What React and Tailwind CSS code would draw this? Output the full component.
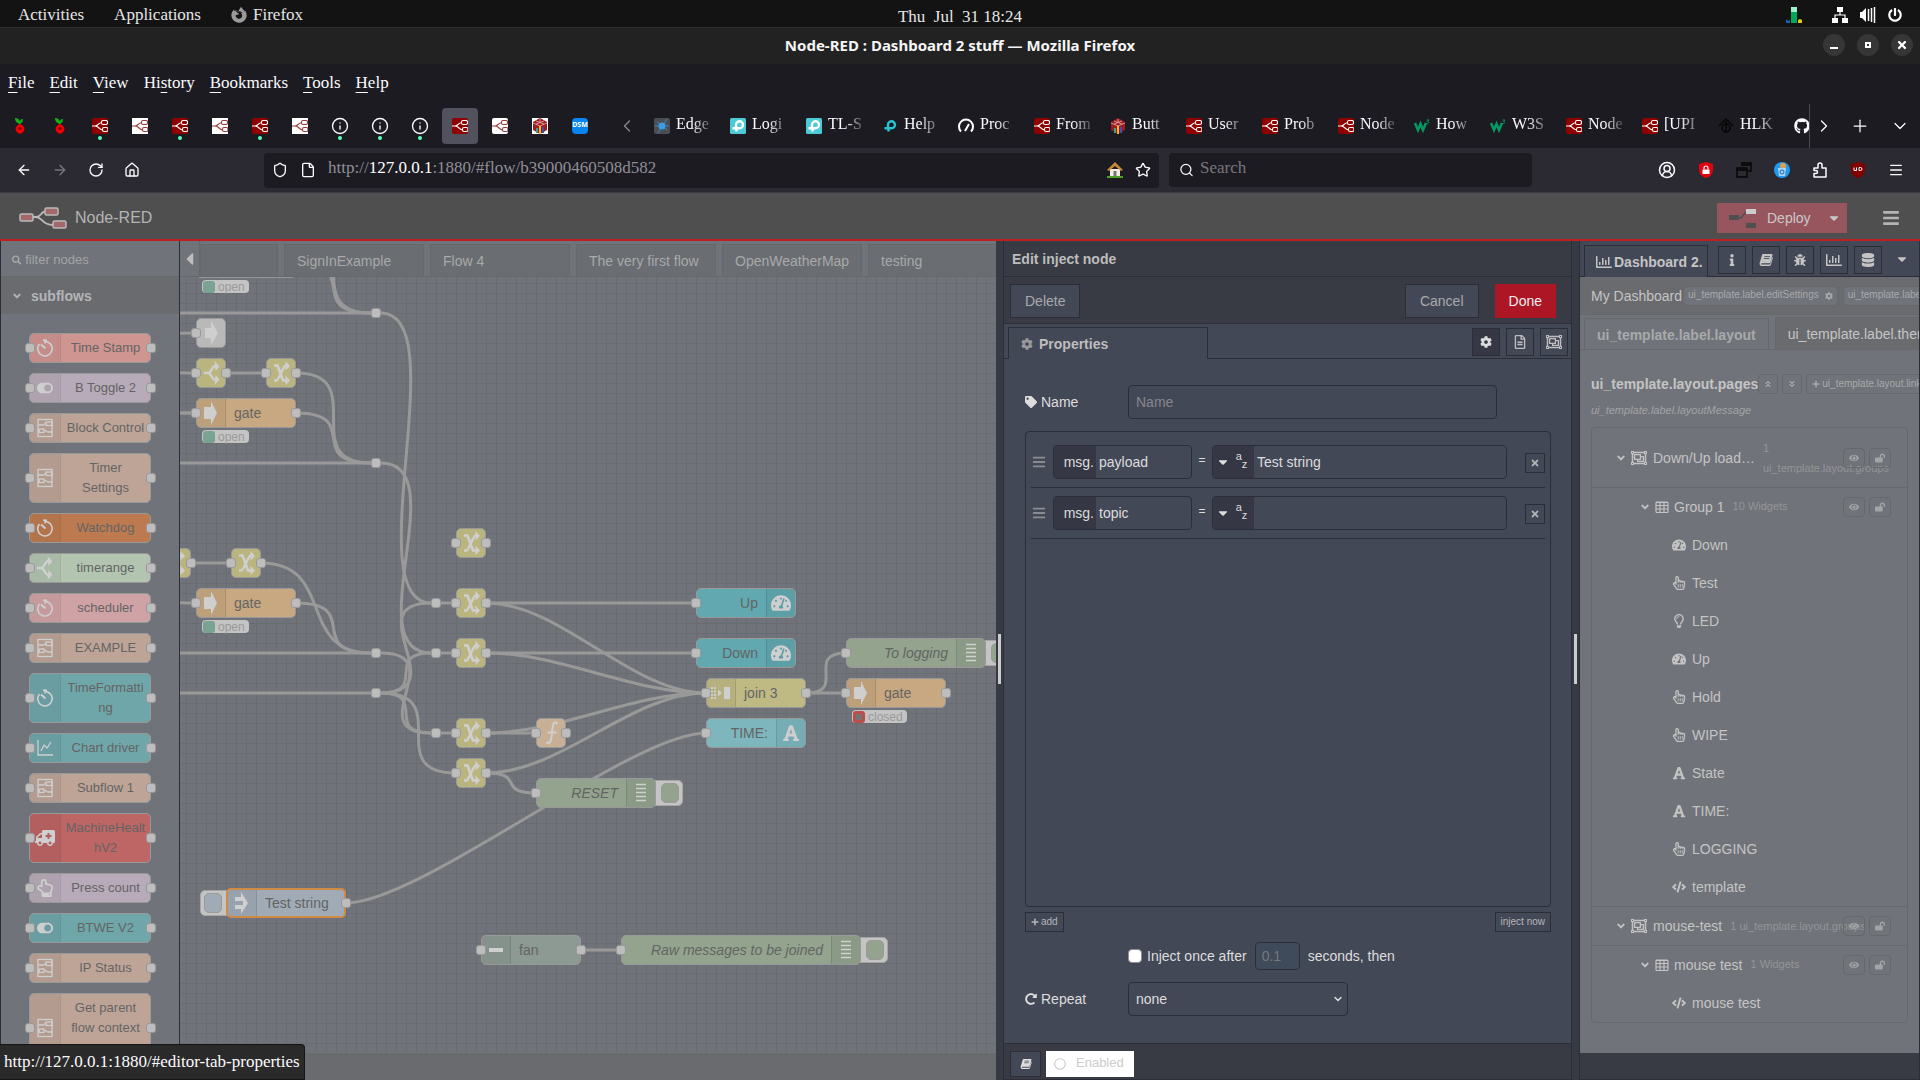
import { useState } from 'react'
import clsx from 'clsx'
import {
  FaSearch, FaCog, FaRegFileAlt, FaRegObjectGroup, FaTag, FaTimes, FaPlus, FaCaretDown, FaCaretLeft, FaBars,
  FaInfo, FaBug, FaRegChartBar, FaDatabase, FaAngleDoubleUp, FaAngleDoubleDown, FaAngleDown, FaEye, FaLockOpen,
  FaTachometerAlt, FaRegHandPointer, FaRegHandPointUp, FaRegLightbulb, FaFont, FaCode, FaRedoAlt,
  FaAmbulance, FaRegCircle, FaGithub, FaFirefoxBrowser, FaPowerOff, FaToggleOn,
} from 'react-icons/fa'
import {
  ArrowLeft, ArrowRight, RotateCw, House, Shield, File, Star, Search, ChevronLeft, ChevronRight, ChevronDown,
  Plus, CircleUserRound, Menu, Info,
} from 'lucide-react'

/* ---------- small drawings ---------- */

function NodeRedMark({ light, rounded }) {
  return (
    <svg viewBox="0 0 16 16" className="size-4 shrink-0">
      <rect width="16" height="16" rx={rounded ? 2 : 0} fill={light ? '#fff' : '#8f0000'} />
      <g fill="none" stroke={light ? '#9b3a3a' : '#fff'} strokeWidth="1.1">
        <path d="M0 8h3c3 0 3-3 7-3.500M3 8c4 0 4 4 8 4" />
        <rect x="9.500" y="2.500" width="6" height="4" rx="1.500" />
        <rect x="10.500" y="9.500" width="5.500" height="4" rx="1.500" />
      </g>
    </svg>
  )
}

function PiHole() {
  return (
    <svg viewBox="0 0 16 16" className="size-4 shrink-0">
      <path d="M8 6C4 5 3 2 3 0c3 0 5 2 5 4 0-2 1-3 3-3 0 2-1 4-3 5z" fill="#12b212" />
      <path d="M8 6l2 1 2 2 .5 2-.5 2-2 2-2 1-2-1-2-2-.5-2 .5-2 2-2z" fill="#f00000" />
      <circle cx="8" cy="10.500" r="1.800" fill="#8b0000" />
    </svg>
  )
}

function CubeMark({ plain }) {
  return (
    <svg viewBox="0 0 16 16" className="size-4 shrink-0">
      {!plain && <rect width="16" height="16" fill="#fff" />}
      <path d="M8 0l7 4v8l-7 4-7-4V4z" fill="#9d1c1f" />
      <path d="M1 5l7 3 7-3M8 1v3M4 3l8 3M12 3L4 6" stroke="#e8b0b0" strokeWidth=".8" fill="none" />
      <path d="M4 15v-5h2v5z" fill="#3f9e8f" />
      <path d="M7 16V8h2v8z" fill="#f0b93a" />
      <path d="M10 15V9h2v6z" fill="#3d50b8" />
    </svg>
  )
}

function TpMark({ plain }) {
  return (
    <svg viewBox="0 0 16 16" className="size-4 shrink-0">
      {!plain && <rect width="16" height="16" rx="1.500" fill="#4acbd6" />}
      <path d="M6 10V7a3.500 3.500 0 1 1 3.500 3.300H2.500M6.500 10v3.500" fill="none" stroke={plain ? '#27c5d3' : '#fff'} strokeWidth="2.400" />
    </svg>
  )
}

function EdgeMark() {
  return (
    <svg viewBox="0 0 16 16" className="size-4 shrink-0">
      <rect width="16" height="16" rx="2" fill="#4b4d52" />
      <path d="M1 8h14M4 15L13 1M3 4l10 8" stroke="#3389cc" strokeWidth="1" />
      <circle cx="8" cy="8" r="3.500" fill="#3f9be0" />
    </svg>
  )
}

function DsmMark() {
  return <span className="flex size-4 items-center justify-center rounded-sm bg-[#0a84f0] font-sans text-[7px] font-bold text-white">DSM</span>
}

function GaugeMark() {
  return (
    <svg viewBox="0 0 16 16" className="size-4 shrink-0" fill="none" stroke="#fff" strokeWidth="2">
      <path d="M3 13.500A7 7 0 1 1 13 13.500M7 13l4-7" />
    </svg>
  )
}

function W3Mark() {
  return (
    <svg viewBox="0 0 16 16" className="size-4 shrink-0" fill="none" stroke="#059862">
      <path d="M1 5l3 7 2.500-6L9 12l3-7" strokeWidth="2.600" />
      <path d="M12.500 2h2.500l-1.500 1.500c2 0 1.500 2.500-1 2" strokeWidth="1" />
    </svg>
  )
}

function TreeMark() {
  return (
    <svg viewBox="0 0 16 16" className="size-4 shrink-0" fill="none" stroke="#050505" strokeWidth="1.400">
      <path d="M1 8l7-7 7 7M8 3v12" />
      <circle cx="8" cy="10" r="4" />
    </svg>
  )
}

function BookIcon({ className }) {
  return (
    <svg viewBox="0 0 16 14" className={clsx('h-3.5 w-4', className)}>
      <path d="M5 0h9.500c.9 0 1.300.6 1 1.400l-2.400 8.200c-.2.800-.8 1.200-1.600 1.200H3.200c-.9 0-1.300.9-.4 1.400h9.800L15.300 3.500c.7.200.8.700.6 1.400l-2.200 7.500c-.3 1-1 1.600-2 1.600H3C1.200 14 0 12.400.6 10.600L3.200 1.700C3.500.6 4 0 5 0z" fill="currentColor" />
      <path d="M6 3h6.500M5.400 5.300h6.500" stroke="#434857" strokeWidth="1" />
    </svg>
  )
}

function TableIcon() {
  return (
    <svg viewBox="0 0 14 12" className="h-3 w-3.5 shrink-0" fill="none" stroke="currentColor" strokeWidth="1.200">
      <rect x="1" y="1" width="12" height="10.500" rx="1" />
      <path d="M1 1.500h12M1 4.500h12M1 8h12M5 1v10M9 1v10" />
    </svg>
  )
}

function SubflowIcon() {
  return (
    <svg viewBox="0 0 16 20" className="h-5 w-4" fill="none" stroke="currentColor" strokeWidth="1.300">
      <rect x="1" y="1.500" width="14" height="17" />
      <path d="M1 7h5c2 0 1-1.500 3-1.500M15 14h-4c-2 0-1-1.500-3-1.500M1 13h2" />
      <rect x="9" y="4" width="6" height="3.500" />
      <rect x="2" y="11" width="5" height="3.500" />
    </svg>
  )
}

function TimerIcon() {
  return (
    <svg viewBox="0 0 18 18" className="size-[18px]" fill="none" stroke="currentColor" strokeWidth="1.600">
      <path d="M9 1.500v3M9 2.500a7.200 7.200 0 1 1-5.500 2.500" />
      <path d="M5 5.500l4.500 4" strokeWidth="2" />
      <path d="M7 1.200h4" />
    </svg>
  )
}

function ChangeIcon() {
  return (
    <svg viewBox="0 0 16 24" className="h-6 w-4">
      <path d="M0 4.500h3.500L9 19.500h3M0 19.500h2.500c2 0 7-15 9-15h.5" fill="none" stroke="currentColor" strokeWidth="2.600" />
      <path d="M11.500 0l4.500 5-4.500 4.500zM11.500 14.500l4.500 5-4.500 4.500z" fill="currentColor" />
    </svg>
  )
}

function SwitchIcon() {
  return (
    <svg viewBox="0 0 16 24" className="h-6 w-4">
      <path d="M0 12h4c4 0 3-7 8-7M4 12c4 0 3 7 8 7" fill="none" stroke="currentColor" strokeWidth="2.400" />
      <path d="M10.500 0l5 5.500-4 4.500zM11.500 14l4 4.500-5 5.500z" fill="currentColor" />
    </svg>
  )
}

function ArrowIcon() {
  return (
    <svg viewBox="0 0 14 24" className="h-6 w-3.5">
      <path d="M0 6h7V0l6 12-6 12v-6H0z" fill="currentColor" />
    </svg>
  )
}

function InjectIcon() {
  return (
    <svg viewBox="0 0 14 24" className="h-6 w-3.5">
      <path d="M0 6h6V1l7 11-7 11v-5H0v-4h8v-4H0z" fill="currentColor" />
    </svg>
  )
}

function LinkIcon() {
  return (
    <svg viewBox="0 0 14 24" className="h-6 w-3.5">
      <path d="M0 7h6V0l7 12-7 12v-7H0v-2a4 4 0 0 0 0-6z" fill="currentColor" />
      <circle cx="3" cy="12" r="2.500" fill="none" stroke="currentColor" strokeWidth="1.500" />
    </svg>
  )
}

function JoinIcon() {
  return (
    <svg viewBox="0 0 20 12" className="h-3 w-5" fill="currentColor">
      <path d="M0 0h2v2H0zM3 0h2v2H3zM0 3.500h2v2H0zM3 3.500h2v2H3zM0 7h2v2H0zM3 7h2v2H3zM0 10h2v2H0zM3 10h2v2H3zM7 2.500L11 6l-4 3.500zM13 0h6v12h-6z" />
    </svg>
  )
}

function DebugIcon() {
  return (
    <svg viewBox="0 0 12 20" className="h-5 w-3" stroke="currentColor" strokeWidth="1.400">
      <path d="M1 1.500h10M1 5.500h10M1 9.500h10M1 13.500h10M1 17.500h10" />
    </svg>
  )
}

function FunctionIcon() {
  return (
    <svg viewBox="0 0 14 24" className="h-6 w-3.5" fill="none" stroke="currentColor" strokeWidth="2">
      <path d="M12.500 3C10-.5 8 2 7.500 7L6.500 16c-.5 5-2.500 7.500-5 5M2.500 11.500h9" />
    </svg>
  )
}

function LineChartIcon() {
  return (
    <svg viewBox="0 0 16 16" className="size-4" fill="none" stroke="currentColor" strokeWidth="1.300">
      <path d="M1 0v15h15M4 11l3-6 3 3 4-6" />
    </svg>
  )
}

function RangeIcon() {
  return <span className="h-1 w-3.5 bg-current" />
}

const ICONS = {
  subflow: SubflowIcon,
  timer: TimerIcon,
  change: ChangeIcon,
  switch: SwitchIcon,
  arrow: ArrowIcon,
  inject: InjectIcon,
  link: LinkIcon,
  join: JoinIcon,
  debug: DebugIcon,
  function: FunctionIcon,
  chart: LineChartIcon,
  range: RangeIcon,
  toggle: () => <FaToggleOn className="size-4" />,
  ambulance: () => <FaAmbulance className="size-5 -scale-x-100" />,
  hand: () => <FaRegHandPointUp className="size-[18px]" />,
  gauge: () => <FaTachometerAlt className="size-5" />,
  font: () => <FaFont className="size-[18px]" />,
}

/* ---------- desktop and browser ---------- */

function DesktopBar() {
  return (
    <div className="grid h-[27px] shrink-0 grid-cols-3 items-center bg-[#131313] px-[18px] text-[17px] text-[#e6e6e6]">
      <div className="flex items-center gap-[30px]">
        <button>Activities</button>
        <button>Applications</button>
        <button className="flex items-center gap-1.5">
          <FaFirefoxBrowser className="size-4 text-[#9a9a9a]" />
          Firefox
        </button>
      </div>
      <time className="whitespace-pre pt-1 text-center">{'Thu  Jul  31 18:24'}</time>
      <div className="flex items-center justify-end gap-3 text-white">
        <svg viewBox="0 0 16 16" className="mr-[18px] size-4">
          <path d="M5 0h6v5H5z" fill="#9ff0c8" />
          <path d="M5 5h6v11H5z" fill="#00a85a" />
          <path d="M0 16v-4l2 2 2-1v3z" fill="#0a6ab8" />
          <path d="M12 16v-3l2-1 2 1v3z" fill="#e8c81c" />
        </svg>
        <svg viewBox="0 0 16 16" className="size-4">
          <path d="M5 0h6v5H5zM0 11h6v5H0zM10 11h6v5h-6z" fill="currentColor" />
          <path d="M8 5v3M3 11V8h10v3" fill="none" stroke="currentColor" strokeWidth="1.200" />
        </svg>
        <svg viewBox="0 0 16 16" className="size-4">
          <path d="M0 5h2l4-4v14l-4-4H0z" fill="currentColor" />
          <path d="M8.500 2v12M11.500 1v14M14.500 0v16" stroke="currentColor" strokeWidth="1.500" />
        </svg>
        <FaPowerOff className="size-3.5" />
      </div>
    </div>
  )
}

function WindowTitle() {
  return (
    <div className="relative flex h-[37px] shrink-0 items-center justify-center border-t border-[#303030] bg-[#222222] pb-0.5">
      <h1 className="font-['Noto_Sans',sans-serif] text-[15px] font-bold text-[#f5f5f5]">Node-RED : Dashboard 2 stuff — Mozilla Firefox</h1>
      <div className="absolute right-[7px] flex gap-3">
        <button aria-label="Minimize" className="flex size-[22px] items-center justify-center rounded-full bg-[#363636]">
          <span className="mt-1.5 h-0.5 w-2 bg-white" />
        </button>
        <button aria-label="Restore" className="flex size-[22px] items-center justify-center rounded-full bg-[#363636]">
          <span className="size-1.5 border-2 border-white" />
        </button>
        <button aria-label="Close" className="flex size-[22px] items-center justify-center rounded-full bg-[#363636]">
          <FaTimes className="size-3 text-white" />
        </button>
      </div>
    </div>
  )
}

const MENUS = [['', 'F', 'ile'], ['', 'E', 'dit'], ['', 'V', 'iew'], ['Hi', 's', 'tory'], ['', 'B', 'ookmarks'], ['', 'T', 'ools'], ['', 'H', 'elp']]

const PINNED = [
  { icon: <PiHole /> },
  { icon: <PiHole /> },
  { icon: <NodeRedMark rounded />, dot: true },
  { icon: <NodeRedMark light /> },
  { icon: <NodeRedMark rounded />, dot: true },
  { icon: <NodeRedMark light /> },
  { icon: <NodeRedMark rounded />, dot: true },
  { icon: <NodeRedMark light /> },
  { icon: <Info className="size-[18px]" strokeWidth={1.8} />, dot: true },
  { icon: <Info className="size-[18px]" strokeWidth={1.8} />, dot: true },
  { icon: <Info className="size-[18px]" strokeWidth={1.8} />, dot: true },
  { icon: <NodeRedMark rounded />, active: true },
  { icon: <NodeRedMark light rounded /> },
  { icon: <CubeMark /> },
  { icon: <DsmMark /> },
]

const TABS = [
  { icon: <EdgeMark />, label: 'Edge' },
  { icon: <TpMark />, label: 'Logi' },
  { icon: <TpMark />, label: 'TL-S' },
  { icon: <TpMark plain />, label: 'Help' },
  { icon: <GaugeMark />, label: 'Proc' },
  { icon: <NodeRedMark rounded />, label: 'From' },
  { icon: <CubeMark plain />, label: 'Butt' },
  { icon: <NodeRedMark rounded />, label: 'User' },
  { icon: <NodeRedMark rounded />, label: 'Prob' },
  { icon: <NodeRedMark rounded />, label: 'Node' },
  { icon: <W3Mark />, label: 'How' },
  { icon: <W3Mark />, label: 'W3S' },
  { icon: <NodeRedMark rounded />, label: 'Node' },
  { icon: <NodeRedMark rounded />, label: '[UPI' },
  { icon: <TreeMark />, label: 'HLK' },
]

function BrowserTabs() {
  return (
    <div className="flex h-[45px] items-center text-[#fbfbfe]">
      {PINNED.map((tab, i) => (
        <button
          key={i}
          aria-label={`Pinned tab ${i + 1}`}
          className={clsx('relative mx-0.5 flex h-9 w-9 shrink-0 items-center justify-center rounded-sm', tab.active && 'bg-[#52525e]')}
        >
          {tab.icon}
          {tab.dot && <span className="absolute bottom-1 size-1 rounded-full bg-[#54ffbd]" />}
        </button>
      ))}
      <ChevronLeft className="mx-[17px] size-5 shrink-0 text-[#8b8b92]" strokeWidth={1.5} />
      <div className="flex flex-1 overflow-hidden border-r border-[#4a4a55]">
        {TABS.map((tab, i) => (
          <button key={i} className="flex h-11 w-[76px] shrink-0 items-center gap-1.5">
            {tab.icon}
            <span className="w-10 whitespace-nowrap pb-1 text-left text-base mask-r-from-40%">{tab.label}</span>
          </button>
        ))}
        <FaGithub className="size-4 shrink-0 self-center" />
      </div>
      <ChevronRight className="ml-1 size-5 shrink-0" strokeWidth={1.5} />
      <Plus className="ml-4 size-5 shrink-0" strokeWidth={1.5} />
      <ChevronDown className="ml-5 mr-2.5 size-5 shrink-0" strokeWidth={1.5} />
    </div>
  )
}

function NavBar() {
  return (
    <div className="flex h-[45px] shrink-0 items-center border-b border-[#3c3b44] bg-[#2b2a33] text-[#fbfbfe]">
      <div className="flex w-[264px] shrink-0 gap-5 pl-4">
        <ArrowLeft className="size-4" />
        <ArrowRight className="size-4 text-[#77767d]" />
        <RotateCw className="size-4" />
        <House className="size-4" />
      </div>
      <div className="flex h-[35px] flex-1 items-center gap-3 rounded bg-[#1c1b22] px-2">
        <Shield className="size-4" />
        <File className="size-4" />
        <a href="#flow" className="flex-1 pb-1 text-[17px] text-[#8f8e95]">
          http://<span className="text-white">127.0.0.1</span>:1880/#flow/b39000460508d582
        </a>
        <svg viewBox="0 0 16 16" className="size-4">
          <path d="M3 7h10v7H3z" fill="#f2ede0" />
          <path d="M0 8l8-8 8 8-2 1-6-5-6 5z" fill="#c9873a" />
          <path d="M6.500 9h3v5h-3z" fill="#777" />
          <path d="M0 14h16v2H0z" fill="#4f9e2c" />
        </svg>
        <Star className="size-4" />
      </div>
      <label className="ml-2.5 flex h-[34px] w-[363px] items-center gap-1.5 rounded bg-[#1c1b22] px-2.5">
        <Search className="size-4" />
        <input aria-label="Search" placeholder="Search" className="w-full pb-1 text-[17px] outline-none placeholder:text-[#77767d]" />
      </label>
      <div className="flex w-[388px] items-center justify-end gap-[22px] pr-4">
        <CircleUserRound className="size-[18px]" />
        <svg viewBox="0 0 16 16" className="size-4">
          <path d="M1 2l7-2 7 2v6c0 4-3 7-7 8-4-1-7-4-7-8z" fill="#e3000f" />
          <path d="M4.500 7.500h7V12h-7z" fill="#fff" />
          <path d="M6 7.500V6a2 2 0 0 1 4 0v1.500" fill="none" stroke="#fff" strokeWidth="1.200" />
        </svg>
        <svg viewBox="0 0 16 16" className="size-4" fill="none" stroke="#050505" strokeWidth="1.400">
          <path d="M1 6h10v9H1zM1 8h10M6 4V1h9v8h-3M6 3h9" />
        </svg>
        <svg viewBox="0 0 16 16" className="size-4">
          <circle cx="8" cy="8" r="8" fill="#1d9bf0" />
          <circle cx="9" cy="4" r="3" fill="#e0a04c" />
          <path d="M4 6h8l-1 8H5z" fill="#a8d4f5" />
          <circle cx="8" cy="10" r="2" fill="none" stroke="#1b63a8" />
        </svg>
        <svg viewBox="0 0 16 16" className="size-4" fill="none" stroke="currentColor" strokeWidth="1.500" strokeLinejoin="round">
          <path d="M2 6h4V3a2 2 0 0 1 4 0v3h4v9H2v-3.500h2a1.500 1.500 0 0 0 0-3H2z" />
        </svg>
        <svg viewBox="0 0 16 16" className="size-4">
          <path d="M1 2l7-2 7 2v6c0 4-3 7-7 8-4-1-7-4-7-8z" fill="#800000" />
          <path d="M4 5.500v3h2.500v-3M9 5.500v3h1.500a1.500 1.500 0 0 0 0-3z" fill="none" stroke="#fff" />
        </svg>
        <Menu className="size-4" />
      </div>
    </div>
  )
}

function EditorHeader() {
  return (
    <header className="flex h-12 shrink-0 items-center border-b-2 border-[#bd2020] bg-[#4f4f4f] pl-[19px] pr-5 pt-[3px]">
      <svg viewBox="0 0 48 22" className="h-[22px] w-12" fill="none" stroke="#bababa" strokeWidth="1.500">
        <path d="M13 10h4c6 0 4-6 11-6M17 10c7 0 5 8 17 8" strokeWidth="1.800" />
        <rect x="1" y="7" width="13" height="7" rx="1.500" fill="#a5686a" />
        <rect x="26" y="1" width="13" height="7" rx="1.500" fill="#a5686a" />
        <rect x="34" y="14" width="13" height="7" rx="1.500" fill="#a5686a" />
      </svg>
      <span className="ml-2 text-base text-[#b4b4b4]">Node-RED</span>
      <button className="ml-auto flex h-[30px] w-[130px] items-center bg-[#97565d] pl-3 pr-1 text-[#c9c9c9]">
        <svg viewBox="0 0 28 20" className="h-5 w-7">
          <path d="M8 10h4l5-6" stroke="#4f4f4f" strokeWidth="1.500" fill="none" />
          <path d="M0 7h10v5H0zM17 15h10v5H17z" fill="#4f4f4f" />
          <path d="M17 1h10v5H17z" fill="#cccccc" />
        </svg>
        <span className="ml-2.5 flex-1 text-left text-sm">Deploy</span>
        <FaCaretDown className="mr-0.5 size-3.5" />
      </button>
      <button aria-label="Main menu" className="ml-[35px] text-[#b4b4b4]">
        <FaBars className="size-[18px]" />
      </button>
    </header>
  )
}

/* ---------- palette ---------- */

const PALETTE = [
  { label: 'Time Stamp', icon: 'timer', color: 'bg-[#cf9591]' },
  { label: 'B Toggle 2', icon: 'toggle', color: 'bg-[#b8abb9]' },
  { label: 'Block Control', icon: 'subflow', color: 'bg-[#bda497]' },
  { label: 'Timer Settings', icon: 'subflow', color: 'bg-[#bda497]' },
  { label: 'Watchdog', icon: 'timer', color: 'bg-[#bd7a50]' },
  { label: 'timerange', icon: 'switch', color: 'bg-[#b3c4b1]' },
  { label: 'scheduler', icon: 'timer', color: 'bg-[#cfa3a6]' },
  { label: 'EXAMPLE', icon: 'subflow', color: 'bg-[#bda497]' },
  { label: 'TimeFormatting', icon: 'timer', color: 'bg-[#6fa6aa]' },
  { label: 'Chart driver', icon: 'chart', color: 'bg-[#6fa6aa]' },
  { label: 'Subflow 1', icon: 'subflow', color: 'bg-[#bda497]' },
  { label: 'MachineHealthV2', icon: 'ambulance', color: 'bg-[#be6565]' },
  { label: 'Press count', icon: 'hand', color: 'bg-[#b8abb9]' },
  { label: 'BTWE V2', icon: 'toggle', color: 'bg-[#6fa6aa]' },
  { label: 'IP Status', icon: 'subflow', color: 'bg-[#bda497]' },
  { label: 'Get parent flow context', icon: 'subflow', color: 'bg-[#bda497]', tall: true },
]

function Port({ className }) {
  return <span className={clsx('absolute top-1/2 size-2.5 -translate-y-1/2 rounded-[3px] border border-[#999999] bg-[#bdbdbd]', className)} />
}

function PaletteNode({ node }) {
  const Icon = ICONS[node.icon]
  return (
    <div className={clsx('relative flex w-[122px] shrink-0 rounded-[5px] border border-[#999999]', node.color, node.tall && 'h-[70px]')}>
      <span className="flex w-[31px] shrink-0 items-center justify-center rounded-l-[4px] border-r border-black/5 bg-black/5 text-[#cfcfcf]">
        <Icon />
      </span>
      <span className="min-w-0 flex-1 break-words px-1 py-1 text-center text-[13px] leading-5 text-[#646464]">{node.label}</span>
      <Port className="-left-[5px]" />
      <Port className="-right-[6px]" />
    </div>
  )
}

function Palette() {
  return (
    <aside className="flex w-[180px] shrink-0 flex-col overflow-hidden border-x border-[#2b2e38] bg-[#70737a]">
      <label className="flex h-9 shrink-0 items-center gap-1 border-b border-[#66686b] pl-[11px] pt-0.5 text-[#a8a9ab]">
        <FaSearch className="size-2.5" />
        <input aria-label="filter nodes" placeholder="filter nodes" className="w-full text-[13px] outline-none placeholder:text-[#a3a4a6]" />
      </label>
      <button className="flex h-[37px] shrink-0 items-center gap-2 bg-[#6a6b6f] pl-2.5 text-sm font-bold text-[#b4b5b7]">
        <FaAngleDown className="size-3" />
        subflows
      </button>
      <div className="flex flex-col items-center gap-2.5 pt-[19px]">
        {PALETTE.map((node) => (
          <PaletteNode key={node.label} node={node} />
        ))}
      </div>
    </aside>
  )
}

/* ---------- workspace ---------- */

const FLOW_TABS = ['SignInExample', 'Flow 4', 'The very first flow', 'OpenWeatherMap', 'testing']

// canvas positions, origin at the top left of the grid
const NODES = [
  { x: 16, y: -29, w: 100, label: 'gate', icon: 'arrow', color: 'bg-[#c8a880]', status: 'open' },
  { x: 16, y: 41, w: 30, icon: 'link', color: 'bg-[#b9b9b9]', out: false },
  { x: 16, y: 81, w: 30, icon: 'switch', color: 'bg-[#bab57f]' },
  { x: 86, y: 81, w: 30, icon: 'change', color: 'bg-[#bab57f]' },
  { x: 16, y: 121, w: 100, label: 'gate', icon: 'arrow', color: 'bg-[#c8a880]', status: 'open' },
  { x: -19, y: 271, w: 30, icon: 'change', color: 'bg-[#bab57f]' },
  { x: 51, y: 271, w: 30, icon: 'change', color: 'bg-[#bab57f]' },
  { x: 16, y: 311, w: 100, label: 'gate', icon: 'arrow', color: 'bg-[#c8a880]', status: 'open' },
  { x: 276, y: 251, w: 30, icon: 'change', color: 'bg-[#bab57f]' },
  { x: 276, y: 311, w: 30, icon: 'change', color: 'bg-[#bab57f]' },
  { x: 276, y: 361, w: 30, icon: 'change', color: 'bg-[#bab57f]' },
  { x: 276, y: 441, w: 30, icon: 'change', color: 'bg-[#bab57f]' },
  { x: 276, y: 481, w: 30, icon: 'change', color: 'bg-[#bab57f]' },
  { x: 356, y: 441, w: 30, icon: 'function', color: 'bg-[#c8b097]' },
  { x: 516, y: 311, w: 100, label: 'Up', icon: 'gauge', color: 'bg-[#62a8b0]', right: true, out: false },
  { x: 516, y: 361, w: 100, label: 'Down', icon: 'gauge', color: 'bg-[#62a8b0]', right: true, out: false },
  { x: 526, y: 401, w: 100, label: 'join 3', icon: 'join', color: 'bg-[#bfba84]' },
  { x: 526, y: 441, w: 100, label: 'TIME:', icon: 'font', color: 'bg-[#7db6bd]', right: true, out: false },
  { x: 666, y: 361, w: 140, label: 'To logging', icon: 'debug', color: 'bg-[#93a38e]', right: true, out: false, button: 'right' },
  { x: 666, y: 401, w: 100, label: 'gate', icon: 'arrow', color: 'bg-[#c8a880]', status: 'closed' },
  { x: 356, y: 501, w: 120, label: 'RESET', icon: 'debug', color: 'bg-[#93a38e]', right: true, out: false, button: 'right' },
  { x: 46, y: 611, w: 120, label: 'Test string', icon: 'inject', color: 'bg-[#a1abb6]', into: false, button: 'left', selected: true },
  { x: 301, y: 658, w: 100, label: 'fan', icon: 'range', color: 'bg-[#8d9a94]' },
  { x: 441, y: 658, w: 240, label: 'Raw messages to be joined', icon: 'debug', color: 'bg-[#93a38e]', right: true, out: false, button: 'right' },
]

const JUNCTIONS = [[196, 36], [196, 186], [196, 376], [196, 416], [256, 326], [256, 376], [256, 456]]

const WIRES = [
  [-80, 36, 191, 36], [116, -14, 191, 36], [116, -54, 191, 36],
  [-80, 66, 16, 56], [-80, 86, 16, 96], [-80, 126, 16, 136], [-60, 136, 16, 136], [46, 96, 86, 96],
  [116, 96, 191, 186], [116, 136, 191, 186], [-80, 186, 191, 186],
  [11, 286, 51, 286], [81, 286, 191, 376], [116, 326, 191, 376], [-80, 316, 16, 326],
  [-80, 376, 191, 376], [-80, 416, 191, 416],
  [201, 36, 251, 326], [201, 186, 251, 376], [201, 376, 251, 456],
  [201, 416, 251, 326], [201, 416, 251, 376], [201, 416, 251, 456], [201, 416, 276, 496],
  [261, 326, 276, 326], [261, 376, 276, 376], [261, 456, 276, 456],
  [306, 326, 516, 326], [306, 326, 526, 416], [306, 376, 516, 376], [306, 376, 526, 416],
  [306, 456, 356, 456], [306, 456, 526, 416], [306, 496, 526, 416], [306, 496, 356, 516],
  [166, 626, 526, 456], [626, 416, 666, 416], [626, 416, 666, 376], [401, 673, 441, 673],
]

function wirePath([x1, y1, x2, y2]) {
  const delta = Math.hypot(x2 - x1, y2 - y1)
  const reach = Math.min(75, delta * 0.75)
  return `M${x1} ${y1}C${x1 + reach} ${y1} ${x2 - reach} ${y2} ${x2} ${y2}`
}

function FlowNode({ node }) {
  const Icon = ICONS[node.icon]
  return (
    <div className="absolute h-[30px]" style={{ left: node.x, top: node.y, width: node.w }}>
      {node.button && (
        <span className={clsx('absolute top-0.5 flex h-[26px] w-8 items-center rounded-[5px] border border-[#a5a5a5] bg-[#c4c4c4]', node.button === 'right' ? '-right-[27px] justify-end pr-[3px]' : '-left-[26px] pl-[3px]')}>
          <span className={clsx('h-5 w-[18px] rounded-[5px] border border-[#999999]', node.color)} />
        </span>
      )}
      <div
        className={clsx(
          'relative flex h-full overflow-hidden rounded-[5px] border',
          node.color,
          node.right && 'flex-row-reverse',
          node.selected ? 'border-2 border-[#d08a48]' : 'border-[#999999]',
        )}
      >
        <span className={clsx('flex w-[29px] shrink-0 items-center justify-center text-[#cfcfcf]', node.label && 'bg-black/5', node.label && (node.right ? 'border-l border-black/10' : 'border-r border-black/10'))}>
          <Icon />
        </span>
        {node.label && (
          <span className={clsx('flex-1 self-center whitespace-nowrap px-2 text-sm text-[#646464]', node.right && 'text-right', node.button === 'right' && 'italic')}>
            {node.label}
          </span>
        )}
      </div>
      {node.into !== false && <Port className="-left-[5px]" />}
      {node.out !== false && <Port className="-right-[5px]" />}
      {node.status && (
        <span className="absolute left-1.5 top-8 flex h-[13px] items-center gap-[3px] rounded-sm bg-[#c4c4c4] pl-px pr-1 text-xs leading-3 text-[#9a9a9a]">
          <span className={clsx('size-3 rounded-[3px]', node.status === 'open' ? 'bg-[#7aa393]' : 'border-[3px] border-[#bb4d4d] bg-[#747474]')} />
          {node.status}
        </span>
      )}
    </div>
  )
}

function Workspace() {
  return (
    <main className="flex min-w-0 flex-1 flex-col overflow-hidden bg-[#70737a]">
      <div className="flex h-9 shrink-0 items-end gap-1.5 overflow-hidden border-b border-[#66686b] text-sm text-[#a8a9ab]">
        <div className="flex h-full shrink-0">
          <button aria-label="Scroll tabs left" className="flex w-5 items-center justify-center border-r border-[#66686b]">
            <FaCaretLeft className="size-5 text-[#bdbdbd]" />
          </button>
          <span className="mt-[3px] w-[78px] border border-b-0 border-[#66686b] bg-[#6a6d71]" />
        </div>
        {FLOW_TABS.map((tab) => (
          <button key={tab} className="h-8 w-[140px] shrink-0 whitespace-nowrap border border-b-0 border-[#66686b] bg-[#6a6d71] px-3 text-left">
            {tab}
          </button>
        ))}
      </div>
      <div className="relative flex-1 overflow-hidden bg-[#70737a] bg-[linear-gradient(#696c70_1px,transparent_1px),linear-gradient(90deg,#696c70_1px,transparent_1px)] bg-[length:10px_10px] bg-[position:6px_6px]">
        <svg className="absolute inset-0 size-full" fill="none" stroke="#999999" strokeWidth="3">
          {WIRES.map((wire) => (
            <path key={wire.join()} d={wirePath(wire)} />
          ))}
        </svg>
        {JUNCTIONS.map(([x, y]) => (
          <span key={`${x}-${y}`} className="absolute size-2.5 -translate-x-1/2 -translate-y-1/2 rounded-[3px] border border-[#999999] bg-[#bdbdbd]" style={{ left: x, top: y }} />
        ))}
        {NODES.map((node) => (
          <FlowNode key={`${node.x}-${node.y}`} node={node} />
        ))}
      </div>
      <div className="h-[26px] shrink-0 border-t border-[#66686b] bg-[#6a6b6f]" />
    </main>
  )
}

/* ---------- edit tray ---------- */

function PropertyRow({ name, initial }) {
  const [value, setValue] = useState(initial)
  return (
    <li className="flex items-center border-b border-[#2b2e38] py-2">
      <FaBars className="mx-px size-3.5 shrink-0 text-[#8a8b8e]" />
      <div className="ml-1.5 flex h-[34px] w-[139px] shrink-0 items-center overflow-hidden rounded border border-[#2b2e38]">
        <span className="flex h-full w-[42px] shrink-0 items-center justify-end bg-[#353844] pr-0.5">msg.</span>
        <input aria-label={`${name} property`} defaultValue={name} className="w-full min-w-0 pl-[3px] outline-none" />
      </div>
      <span className="w-5 shrink-0 pb-1 text-center text-xs">=</span>
      <div className="flex h-[34px] flex-1 items-center overflow-hidden rounded border border-[#2b2e38]">
        <button aria-label="Value type" className="flex h-full w-[41px] shrink-0 items-center justify-center gap-1.5 bg-[#353844] pr-1">
          <FaCaretDown className="size-3.5" />
          <span className="flex text-[11px] leading-3">
            <span className="-mt-1">a</span>
            <span className="mt-1">z</span>
          </span>
        </button>
        <input aria-label={`${name} value`} value={value} onChange={(e) => setValue(e.target.value)} className="w-full min-w-0 pl-[3px] outline-none" />
      </div>
      <button aria-label={`Remove ${name}`} className="ml-[18px] mt-0.5 flex h-5 w-5 shrink-0 items-center justify-center border border-[#2b2e38] text-[#b4b5b7]">
        <FaTimes className="size-2.5" />
      </button>
    </li>
  )
}

function EditTray() {
  return (
    <section className="flex w-[569px] shrink-0 flex-col border-x border-[#2b2e38] bg-[#434857] text-sm text-[#dddddd]">
      <h2 className="flex h-9 shrink-0 items-center border-b border-[#2b2e38] bg-[#383b43] pl-2 font-bold text-[#bdbdbd]">Edit inject node</h2>
      <div className="flex h-[47px] shrink-0 items-center border-b border-[#2b2e38] bg-[#383b43] pl-1.5 pr-[15px] pt-0.5 text-[#a8a9ab]">
        <button className="h-[34px] border border-[#2b2e38] bg-[#434857] px-3.5">Delete</button>
        <button className="ml-auto h-[34px] border border-[#2b2e38] bg-[#434857] px-3.5">Cancel</button>
        <button className="ml-4 h-[34px] bg-[#ad1625] px-3.5 text-[#eeeeee]">Done</button>
      </div>
      <div className="flex h-[35px] shrink-0 items-end border-b border-[#2b2e38] pl-1">
        <button className="-mb-px flex h-8 w-[200px] items-center gap-1.5 border border-b-0 border-[#2b2e38] bg-[#434857] pl-3 font-bold text-[#bdbdbd]">
          <FaCog className="size-3 text-[#999999]" />
          Properties
        </button>
        <div className="mb-[2px] ml-auto flex gap-1.5 pr-[3px] text-[#bdbdbd]">
          <button aria-label="Properties" className="flex size-7 items-center justify-center border border-[#2b2e38] bg-[#353844]">
            <FaCog className="size-3 text-[#dddddd]" />
          </button>
          <button aria-label="Description" className="flex size-7 items-center justify-center border border-[#2b2e38]">
            <FaRegFileAlt className="size-3.5" />
          </button>
          <button aria-label="Appearance" className="flex size-7 items-center justify-center border border-[#2b2e38]">
            <FaRegObjectGroup className="size-4" />
          </button>
        </div>
      </div>
      <form className="flex flex-1 flex-col pl-[21px] pr-5 pt-[26px]">
        <div className="flex items-center">
          <label htmlFor="node-name" className="flex w-[103px] items-center gap-1">
            <FaTag className="size-3" />
            Name
          </label>
          <input id="node-name" placeholder="Name" className="h-[34px] w-[369px] rounded border border-[#2b2e38] px-[7px] outline-none placeholder:text-[#85868c]" />
        </div>
        <ol className="mt-3 min-h-0 flex-1 rounded border border-[#2b2e38] px-[5px] pt-[5px]">
          <PropertyRow name="payload" initial="Test string" />
          <PropertyRow name="topic" initial="" />
        </ol>
        <div className="mt-[5px] flex justify-between text-[10px] text-[#b4b5b7]">
          <button type="button" className="flex h-5 items-center gap-0.5 border border-[#2b2e38] px-[5px]">
            <FaPlus className="size-2" />
            add
          </button>
          <button type="button" className="h-5 border border-[#2b2e38] px-[5px]">inject now</button>
        </div>
        <div className="mt-2.5 flex items-center pl-[103px]">
          <input id="once" type="checkbox" className="size-3.5 appearance-none rounded-sm border border-[#8f8f9d] bg-white" />
          <label htmlFor="once" className="ml-[5px]">Inject once after</label>
          <input aria-label="Delay in seconds" disabled placeholder="0.1" className="mx-2 h-7 w-[45px] rounded border border-[#2b2e38] bg-[#3f4a5a] px-1.5 placeholder:text-[#76787d]" />
          <span>seconds, then</span>
        </div>
        <div className="mb-[27px] mt-3 flex items-center">
          <label htmlFor="repeat" className="flex w-[103px] items-center gap-1">
            <FaRedoAlt className="size-3" />
            Repeat
          </label>
          <div className="relative">
            <select id="repeat" className="h-[34px] w-[220px] appearance-none rounded border border-[#2b2e38] px-[7px] outline-none">
              <option>none</option>
            </select>
            <ChevronDown className="pointer-events-none absolute right-1 top-[11px] size-3" strokeWidth={3} />
          </div>
        </div>
      </form>
      <footer className="flex h-[37px] shrink-0 items-center gap-[5px] border-y border-[#2b2e38] bg-[#383b43] pl-1.5 pt-1">
        <button aria-label="Node help" className="flex h-[26px] w-[31px] items-center justify-center border border-[#2b2e38] bg-[#434857]">
          <BookIcon className="h-2.5! w-3!" />
        </button>
        <button className="flex h-[26px] w-[88px] items-center gap-2.5 bg-white pl-2 text-[13px] text-[#cccccc]">
          <FaRegCircle className="size-3" />
          Enabled
        </button>
      </footer>
    </section>
  )
}

/* ---------- sidebar ---------- */

const WIDGETS = [
  { label: 'Down', Icon: FaTachometerAlt },
  { label: 'Test', Icon: FaRegHandPointer },
  { label: 'LED', Icon: FaRegLightbulb },
  { label: 'Up', Icon: FaTachometerAlt },
  { label: 'Hold', Icon: FaRegHandPointer },
  { label: 'WIPE', Icon: FaRegHandPointer },
  { label: 'State', Icon: FaFont },
  { label: 'TIME:', Icon: FaFont },
  { label: 'LOGGING', Icon: FaRegHandPointer },
  { label: 'template', Icon: FaCode },
]

function RowButtons() {
  return (
    <div className="absolute right-4 flex gap-1 text-[#a3a4a6]">
      <button aria-label="Toggle visibility" className="flex h-5 w-[22px] items-center justify-center rounded-sm border border-[#66686b]">
        <FaEye className="size-2.5" />
      </button>
      <button aria-label="Toggle lock" className="flex h-5 w-[22px] items-center justify-center rounded-sm border border-[#66686b]">
        <FaLockOpen className="size-2.5" />
      </button>
    </div>
  )
}

function PageRow({ label, note, className }) {
  return (
    <div className={clsx('relative flex items-center border-b border-[#66686b] pl-[23px]', className)}>
      <FaAngleDown className="size-3 shrink-0" />
      <FaRegObjectGroup className="ml-1 size-4 shrink-0" />
      <span className="ml-1.5 shrink-0 whitespace-nowrap">{label}</span>
      <span className="ml-2 text-[11px] leading-5 text-[#949597]">{note}</span>
      <RowButtons />
    </div>
  )
}

function GroupRow({ label, note }) {
  return (
    <div className="relative flex h-[38px] items-center pl-[47px]">
      <FaAngleDown className="size-3 shrink-0" />
      <span className="ml-1">
        <TableIcon />
      </span>
      <span className="ml-[5px] whitespace-nowrap">{label}</span>
      <span className="ml-2 text-[11px] text-[#949597]">{note}</span>
      <RowButtons />
    </div>
  )
}

function WidgetRow({ label, Icon }) {
  return (
    <div className="flex h-[38px] items-center gap-1.5 pl-20">
      <Icon className="size-3.5" />
      {label}
    </div>
  )
}

const SIDEBAR_BUTTONS = [
  { name: 'Information', icon: <FaInfo className="size-3" /> },
  { name: 'Help', icon: <BookIcon className="h-3! w-3.5!" /> },
  { name: 'Debug', icon: <FaBug className="size-3" /> },
  { name: 'Dashboard', icon: <FaRegChartBar className="size-4" /> },
  { name: 'Context data', icon: <FaDatabase className="size-3.5" /> },
]

function Sidebar() {
  return (
    <aside className="flex w-[341px] shrink-0 flex-col overflow-hidden border border-t-0 border-[#2b2e38] bg-[#383b43] text-sm text-[#c4c4c4]">
      <div className="flex h-9 shrink-0 items-end border-b border-[#2b2e38] bg-[#434857] pl-1">
        <button className="-mb-px mr-2.5 flex h-8 w-[124px] items-center gap-0.5 whitespace-nowrap border border-b-0 border-[#2b2e38] bg-[#434857] pl-[11px] font-bold">
          <FaRegChartBar className="size-4 shrink-0" />
          <span className="shrink-0">Dashboard 2.</span>
        </button>
        <div className="mb-[2px] flex gap-1.5">
          {SIDEBAR_BUTTONS.map(({ name, icon }) => (
            <button key={name} aria-label={name} className="flex size-7 items-center justify-center border border-[#2b2e38]">
              {icon}
            </button>
          ))}
        </div>
        <button aria-label="More tabs" className="mb-[10px] ml-[13px]">
          <FaCaretDown className="size-3.5" />
        </button>
      </div>
      <div className="mb-[26px] flex flex-1 flex-col bg-[#70737a]">
        <div className="flex h-[38px] shrink-0 items-center gap-[5px] overflow-hidden whitespace-nowrap border-b border-[#66686b] bg-[#6a6b6f] pl-[11px]">
          <span className="-mr-1 shrink-0">My Dashboard</span>
          <button className="flex h-5 shrink-0 items-center gap-1.5 rounded-sm border border-[#66686b] bg-[#70737a] px-1 text-[10px] text-[#a8a9ab]">
            ui_template.label.editSettings
            <FaCog className="size-2" />
          </button>
          <button className="h-5 shrink-0 rounded-sm border border-[#66686b] bg-[#70737a] px-1 text-[10px] text-[#a8a9ab]">ui_template.label.openDashboard</button>
        </div>
        <div className="flex h-[35px] shrink-0 items-end gap-1.5 overflow-hidden whitespace-nowrap border-b border-[#66686b] pl-1">
          <button className="-mb-px h-8 shrink-0 border border-b-0 border-[#66686b] bg-[#70737a] px-3 font-bold text-[#a8a9ab]">ui_template.label.layout</button>
          <button className="h-8 shrink-0 border border-b-0 border-[#66686b] bg-[#6a6b6f] px-3">ui_template.label.theming</button>
        </div>
        <div className="flex h-[68px] shrink-0 flex-col overflow-hidden whitespace-nowrap pl-[11px] pt-6">
          <div className="flex items-center gap-1 text-[#a8a9ab]">
            <h3 className="-mr-1 shrink-0 font-bold text-[#c4c4c4]">ui_template.layout.pages</h3>
            <button aria-label="Collapse all" className="flex size-5 shrink-0 items-center justify-center rounded-sm border border-[#66686b]">
              <FaAngleDoubleUp className="size-2" />
            </button>
            <button aria-label="Expand all" className="flex size-5 shrink-0 items-center justify-center rounded-sm border border-[#66686b]">
              <FaAngleDoubleDown className="size-2" />
            </button>
            <button className="flex h-5 shrink-0 items-center gap-0.5 rounded-sm border border-[#66686b] px-[5px] text-[10px]">
              <FaPlus className="size-2" />
              ui_template.layout.link
            </button>
          </div>
          <p className="mt-2 text-[11px] italic leading-4 text-[#a3a4a6]">ui_template.label.layoutMessage</p>
        </div>
        <div className="mx-[11px] mt-[9px] rounded-sm border border-[#66686b]">
          <PageRow label="Down/Up load…" note={<>1<br />ui_template.layout.groups</>} className="h-[60px]" />
          <GroupRow label="Group 1" note="10 Widgets" />
          {WIDGETS.map((widget) => (
            <WidgetRow key={widget.label} {...widget} />
          ))}
          <div className="border-t border-[#66686b]">
            <PageRow label="mouse-test" note="1 ui_template.layout.groups" className="h-[39px] whitespace-nowrap" />
          </div>
          <GroupRow label="mouse test" note="1 Widgets" />
          <WidgetRow label="mouse test" Icon={FaCode} />
        </div>
      </div>
    </aside>
  )
}

function Separator() {
  return (
    <div className="flex w-[7px] shrink-0 items-center justify-center bg-[#363a43]">
      <span className="mb-1 h-[50px] w-[3px] bg-[#cccccc]" />
    </div>
  )
}

export default function App() {
  return (
    <div className="relative flex h-screen flex-col overflow-hidden bg-[#1c1b22] font-['Liberation_Serif',serif]">
      <DesktopBar />
      <WindowTitle />
      <nav className="flex h-[39px] shrink-0 items-center gap-[15px] pb-0.5 pl-2 text-[17px] text-[#fbfbfe]">
        {MENUS.map(([before, key, after]) => (
          <button key={before + key + after}>
            {before}
            <span className="underline underline-offset-4">{key}</span>
            {after}
          </button>
        ))}
      </nav>
      <BrowserTabs />
      <NavBar />
      <div className="flex min-h-0 flex-1 flex-col font-['Liberation_Sans',sans-serif]">
        <EditorHeader />
        <div className="flex min-h-0 flex-1">
          <Palette />
          <Workspace />
          <Separator />
          <EditTray />
          <Separator />
          <Sidebar />
        </div>
      </div>
      <div className="absolute bottom-0 left-0 rounded-tr border border-l-0 border-[#151515] bg-[#2b2a2b] px-1 pb-[5px] pt-1 text-[17px] text-[#fbfbfe]">
        http://127.0.0.1:1880/#editor-tab-properties
      </div>
    </div>
  )
}
